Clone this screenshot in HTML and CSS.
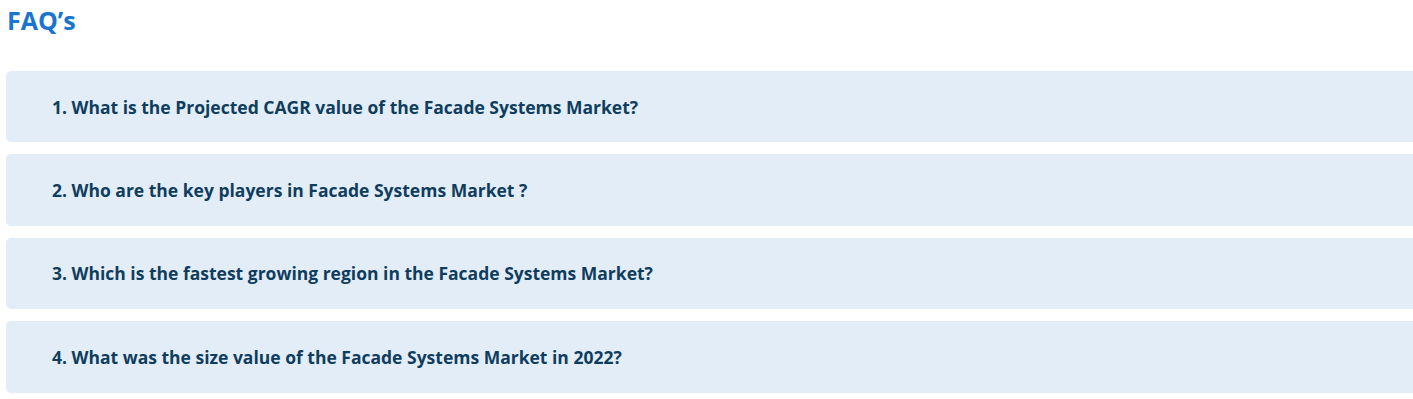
FILE: index.html
```html
<!DOCTYPE html>
<html>

<head>
    <title>FAQ's</title>
    <link rel="stylesheet" href="styles.css">
</head>

<body>

    <h2 class="faq-title">FAQ’s</h2>

    <div class="faq-list">
        <div class="faq-item">1. What is the Projected CAGR value of the Facade Systems Market?</div>
        <div class="faq-item">2. Who are the key players in Facade Systems Market ?</div>
        <div class="faq-item">3. Which is the fastest growing region in the Facade Systems Market?</div>
        <div class="faq-item">4. What was the size value of the Facade Systems Market in 2022?</div>
    </div>

</body>

</html>
```

FILE: styles.css
```css
body {
    margin: 0;
    padding: 0 0 0 6px;
    background-color: #fff;
    font-family: "Open Sans", Lato, sans-serif;
    overflow: hidden;
}

.faq-title {
    margin: 0;
    padding: 2px 0 0 1px;
    height: 71px;
    box-sizing: border-box;
    font-size: 25px;
    line-height: 36px;
    font-weight: 700;
    color: #1a74d0;
}

.faq-list {
    display: flex;
    flex-direction: column;
    gap: 12px;
    margin-right: -30px;
}

.faq-item {
    height: 71.4px;
    display: flex;
    align-items: center;
    padding-left: 46px;
    background-color: #e3edf7;
    border-radius: 5px;
    font-size: 17.5px;
    font-weight: 700;
    color: #0f3d5e;
}
```
